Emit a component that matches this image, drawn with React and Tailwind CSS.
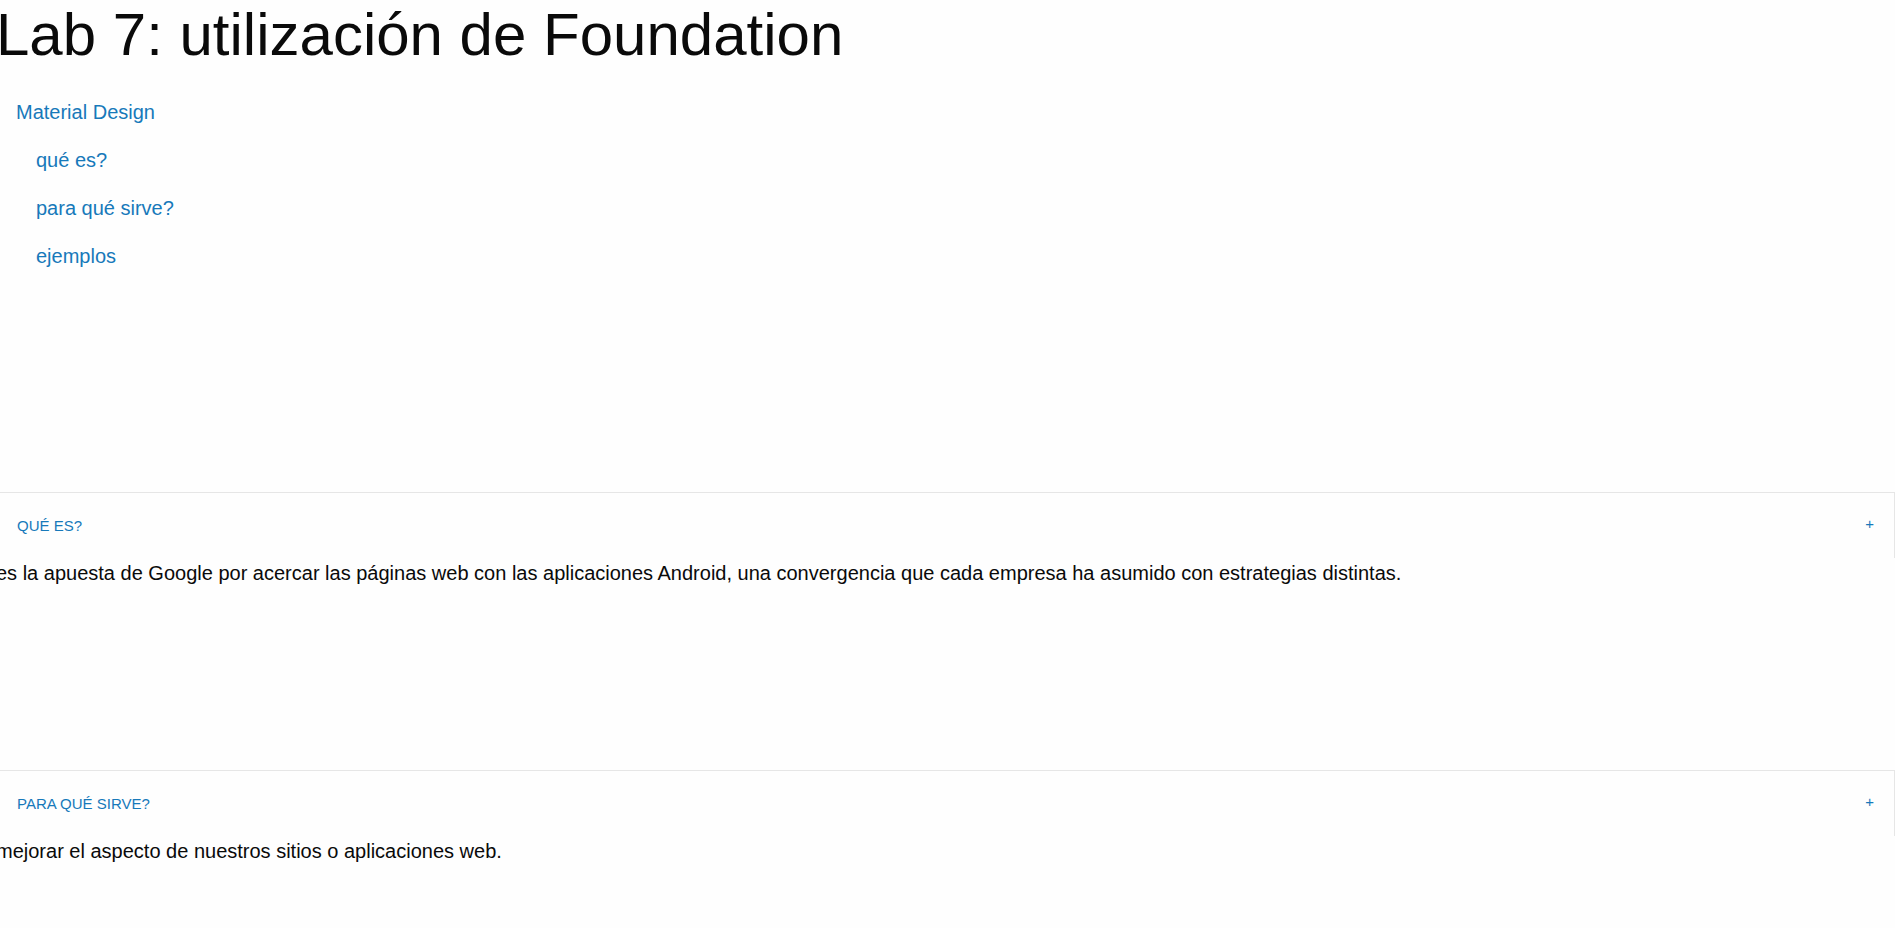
import React from 'react';

const menu = ['qué es?', 'para qué sirve?', 'ejemplos'];

function AccordionItem({ title, children, className = '' }) {
  return (
    <div className={className}>
      <a className="relative block border border-b-0 border-[#e6e6e6] px-[20px] py-[25px] text-[15px] leading-[15px] text-[#1779ba]">
        {title}
        <span className="absolute right-[20px] top-1/2 -mt-[10px] text-[15px] leading-[15px]">+</span>
      </a>
      <p className="text-[20px] leading-[30px]">{children}</p>
    </div>
  );
}

export default function App() {
  return (
    <div className="min-h-screen w-full overflow-hidden bg-[#fefefe] font-['Liberation_Sans',Arial,sans-serif] text-[#0a0a0a]">
      <div className="-ml-[4px]">
        <h1 className="h-[69px] text-[60px] font-normal leading-[69px]">Lab 7: utilización de Foundation</h1>

        <ul className="mt-[19px]">
          <li>
            <a className="block px-[20px] py-[14px] text-[20px] leading-[20px] text-[#1779ba]">Material Design</a>
            <ul className="ml-[20px]">
              {menu.map((item) => (
                <li key={item}>
                  <a className="block px-[20px] py-[14px] text-[20px] leading-[20px] text-[#1779ba]">{item}</a>
                </li>
              ))}
            </ul>
          </li>
        </ul>

        <AccordionItem title="QUÉ ES?" className="mt-[212px]">
          es la apuesta de Google por acercar las páginas web con las aplicaciones Android, una convergencia que cada empresa ha asumido con estrategias distintas.
        </AccordionItem>

        <AccordionItem title="PARA QUÉ SIRVE?" className="mt-[182px]">
          mejorar el aspecto de nuestros sitios o aplicaciones web.
        </AccordionItem>
      </div>
    </div>
  );
}
